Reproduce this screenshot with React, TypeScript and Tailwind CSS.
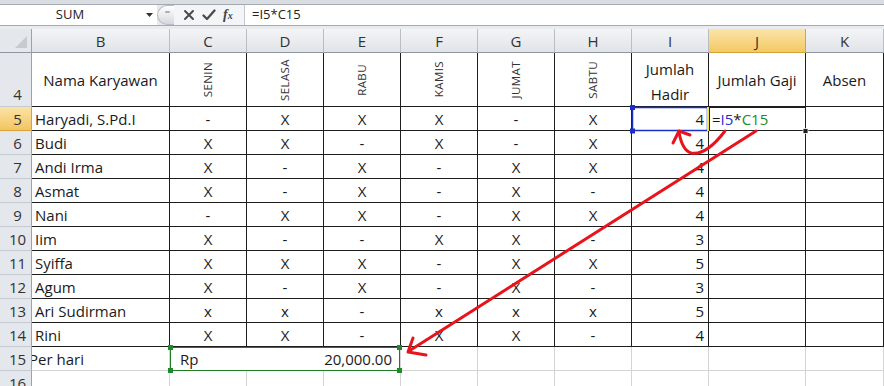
import React from "react";

const COLS = ["B", "C", "D", "E", "F", "G", "H", "I", "J", "K"];
const DAYS = ["SENIN", "SELASA", "RABU", "KAMIS", "JUMAT", "SABTU"];

type Row = { n: number; name: string; d: string[]; h: number };
const ROWS: Row[] = [
  { n: 5, name: "Haryadi, S.Pd.I", d: ["-", "X", "X", "X", "-", "X"], h: 4 },
  { n: 6, name: "Budi", d: ["X", "X", "-", "X", "-", "X"], h: 4 },
  { n: 7, name: "Andi Irma", d: ["X", "-", "X", "-", "X", "X"], h: 4 },
  { n: 8, name: "Asmat", d: ["X", "-", "X", "-", "X", "-"], h: 4 },
  { n: 9, name: "Nani", d: ["-", "X", "X", "-", "X", "X"], h: 4 },
  { n: 10, name: "Iim", d: ["X", "-", "-", "X", "X", "-"], h: 3 },
  { n: 11, name: "Syiffa", d: ["X", "X", "X", "-", "X", "X"], h: 5 },
  { n: 12, name: "Agum", d: ["X", "-", "X", "-", "X", "-"], h: 3 },
  { n: 13, name: "Ari Sudirman", d: ["x", "x", "-", "x", "x", "x"], h: 5 },
  { n: 14, name: "Rini", d: ["X", "X", "-", "X", "X", "-"], h: 4 },
];

const hdrCell =
  "flex items-center justify-center pt-[1px] border-r border-b border-r-[#b9bec5] border-b-[#8f969f] bg-gradient-to-b from-[#f3f4f6] to-[#e1e4e8] text-[15px] text-[#333]";
const rowHdr =
  "flex items-center justify-center pl-[4px] pt-[2px] border-r border-b border-r-[#9aa3ad] border-b-[#c5cad1] bg-[#e4e7eb] text-[15px] text-[#333]";
const rowHdrSel =
  "flex items-center justify-center pl-[4px] pt-[2px] border-r border-b border-r-[#d9a33c] border-b-[#d9a33c] bg-gradient-to-b from-[#fbe3a6] to-[#f3c55f] text-[15px] text-[#333]";
const blk = "border-r border-b border-[#1e1e1e] text-[15px] text-[#1a1a1a]";
const gry = "border-r border-b border-[#d4d4d4] text-[15px] text-[#1a1a1a]";

function FormulaBar() {
  return (
    <div className="flex flex-col h-[29px] bg-[#e7e9ec]">
      <div className="h-[5px] bg-[#dadde1] border-b border-[#a3aab3]" />
      <div className="flex h-[20px]">
        <div className="relative w-[157px] bg-white flex items-center">
          <span className="w-[140px] text-center text-[13px] text-[#222]">SUM</span>
          <svg width="8" height="5" viewBox="0 0 8 5" className="ml-[6px]">
            <polygon points="0,0 7,0 3.5,4" fill="#333" />
          </svg>
        </div>
        <div className="w-[17px] h-[20px] rounded-l-full border border-r-0 border-[#b9bec5] bg-gradient-to-b from-[#ffffff] to-[#d5d8dc] flex items-start justify-center">
          <div className="mt-[5px] ml-[3px] w-[5px] h-[2px] bg-[#a9aeb5] rounded" />
        </div>
        <div className="w-[70px] bg-[#f4f5f6] flex items-center">
          <svg width="12" height="12" viewBox="0 0 12 12" className="ml-[9px]">
            <path d="M2 2 L10 10 M10 2 L2 10" stroke="#4a4a4a" strokeWidth="2" strokeLinecap="round" />
          </svg>
          <svg width="14" height="12" viewBox="0 0 14 12" className="ml-[7px]">
            <path d="M1.5 6.5 L5 10 L12.5 1.5" stroke="#4a4a4a" strokeWidth="2.3" fill="none" strokeLinecap="round" strokeLinejoin="round" />
          </svg>
          <span className="ml-[7px] font-['Liberation_Serif'] italic font-bold text-[14px] text-[#444] leading-none">
            f<span className="text-[10px]">x</span>
          </span>
        </div>
        <div className="w-px bg-[#c3c8ce]" />
        <div className="flex-1 bg-white flex items-center pl-[7px] text-[13px] text-[#222]">=I5*C15</div>
      </div>
      <div className="h-[4px] border-t border-[#a3aab3] bg-[#e9ebee]" />
    </div>
  );
}

function Grid() {
  return (
    <div className="grid grid-cols-[32px_138px_77px_77px_77px_77px_77px_77px_77px_97px_78px] grid-rows-[24px_54px_repeat(12,24px)]">
      {/* header row */}
      <div className="border-r border-b border-r-[#9aa3ad] border-b-[#8f969f] bg-[#e4e7eb] flex items-end justify-end pr-[4px] pb-[4px]">
        <svg width="12" height="12" viewBox="0 0 12 12">
          <polygon points="12,0 12,12 0,12" fill="#c7cbd0" />
        </svg>
      </div>
      {COLS.map((c) =>
        c === "J" ? (
          <div
            key={c}
            className="flex items-center justify-center pt-[1px] border-r border-b border-r-[#d9a33c] border-b-[#d9a33c] bg-gradient-to-b from-[#fbe4a8] to-[#f4c962] text-[15px] text-[#333]"
          >
            {c}
          </div>
        ) : (
          <div key={c} className={hdrCell}>
            {c}
          </div>
        )
      )}

      {/* row 4 */}
      <div className="flex items-end justify-center pl-[4px] pb-[1px] border-r border-b border-r-[#9aa3ad] border-b-[#c5cad1] bg-[#e4e7eb] text-[15px] text-[#333]">
        4
      </div>
      <div className={blk + " flex items-center justify-center pt-[2px]"}>Nama Karyawan</div>
      {DAYS.map((d) => (
        <div key={d} className={blk + " flex items-center justify-center"}>
          <span className="[writing-mode:vertical-rl] rotate-180 text-[11.5px] tracking-[0.4px] text-[#333]">{d}</span>
        </div>
      ))}
      <div className={blk + " flex flex-col items-center justify-center leading-[25px] pt-[4px]"}>
        <span>Jumlah</span>
        <span>Hadir</span>
      </div>
      <div className={blk + " flex items-center justify-center pt-[2px]"}>Jumlah Gaji</div>
      <div className={blk + " flex items-center justify-center pt-[2px]"}>Absen</div>

      {/* data rows */}
      {ROWS.map((r) => (
        <React.Fragment key={r.n}>
          <div className={r.n === 5 ? rowHdrSel : rowHdr}>{r.n}</div>
          <div className={blk + " flex items-center pl-[3px] pt-[2px] whitespace-nowrap"}>{r.name}</div>
          {r.d.map((v, i) => (
            <div key={i} className={blk + " flex items-center justify-center pt-[2px]"}>
              {v}
            </div>
          ))}
          <div className={blk + " flex items-center justify-end pr-[4px] pt-[2px]"}>{r.h}</div>
          <div className={blk + " flex items-center pl-[3px] pt-[2px]"}>
            {r.n === 5 ? (
              <span>
                =<span className="text-[#1f2fd6]">I5</span>*<span className="text-[#1f8a2a]">C15</span>
              </span>
            ) : null}
          </div>
          <div className={blk} />
        </React.Fragment>
      ))}

      {/* row 15 */}
      <div className={rowHdr}>15</div>
      <div className={gry + " flex items-center pt-[2px] overflow-hidden whitespace-nowrap"}>
        <span className="-ml-[3px]">Per hari</span>
      </div>
      <div className={gry + " col-span-3 flex items-center justify-between pt-[2px] pl-[10px] pr-[8px]"}>
        <span>Rp</span>
        <span>20,000.00</span>
      </div>
      {[0, 1, 2, 3, 4, 5].map((i) => (
        <div key={i} className={gry} />
      ))}

      {/* row 16 */}
      <div className={rowHdr}>16</div>
      {COLS.map((c) => (
        <div key={c} className={gry} />
      ))}
    </div>
  );
}

function Overlay() {
  const red = "#e8141c";
  return (
    <svg className="absolute inset-0 pointer-events-none" width="884" height="386" viewBox="0 0 884 386">
      {/* I5 reference box */}
      <rect x="632.5" y="107.5" width="75" height="23" fill="none" stroke="#1b2fc4" strokeWidth="1.5" />
      <rect x="630" y="105" width="5" height="5" fill="#1b2fc4" />
      <rect x="630" y="128.5" width="5" height="5" fill="#1b2fc4" />
      <rect x="707" y="107" width="2" height="24" fill="#f3e34a" />
      {/* J5 active */}
      <rect x="709.5" y="107.5" width="96" height="23" fill="none" stroke="#1e1e1e" strokeWidth="1" />
      <rect x="803" y="128.5" width="5" height="5" fill="#1e1e1e" stroke="#fff" strokeWidth="0.8" />
      {/* C15:E15 box */}
      <rect x="170.5" y="347.5" width="229" height="23" fill="none" stroke="#1f7d25" strokeWidth="1" />
      <rect x="168" y="345" width="5" height="5" fill="#1f8a28" />
      <rect x="397" y="345" width="5" height="5" fill="#1f8a28" />
      <rect x="168" y="368" width="5" height="5" fill="#1f8a28" />
      <rect x="397" y="368" width="5" height="5" fill="#1f8a28" />
      {/* curved arrow */}
      <path d="M725 131 Q706 156 691 153 Q682 150 679 132" fill="none" stroke={red} strokeWidth="3" strokeLinecap="round" />
      <path d="M673 143 L679 131 L690 135" fill="none" stroke={red} strokeWidth="3" strokeLinecap="round" strokeLinejoin="round" />
      {/* long arrow */}
      <path d="M756 131 L409 351" fill="none" stroke={red} strokeWidth="3" strokeLinecap="round" />
      <path d="M413 338 L408 352 L426 355" fill="none" stroke={red} strokeWidth="3" strokeLinecap="round" strokeLinejoin="round" />
    </svg>
  );
}

export default function App() {
  return (
    <div className="relative w-[884px] h-[386px] overflow-hidden bg-white font-['Open_Sans',sans-serif]">
      <FormulaBar />
      <Grid />
      <Overlay />
    </div>
  );
}
